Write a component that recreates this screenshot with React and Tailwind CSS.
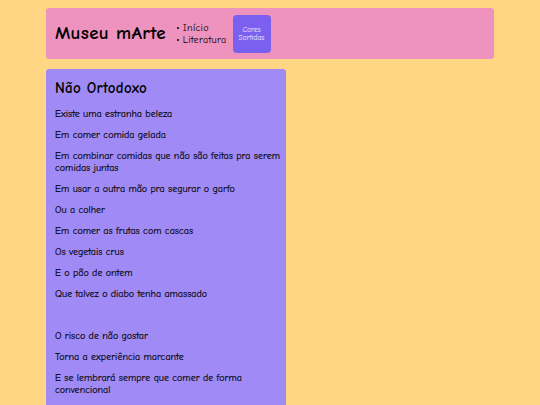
export default function App() {
  const lines = [
    "Existe uma estranha beleza",
    "Em comer comida gelada",
    "Em combinar comidas que não são feitas pra serem comidas juntas",
    "Em usar a outra mão pra segurar o garfo",
    "Ou a colher",
    "Em comer as frutas com cascas",
    "Os vegetais crus",
    "E o pão de ontem",
    "Que talvez o diabo tenha amassado",
    "",
    "O risco de não gostar",
    "Torna a experiência marcante",
    "E se lembrará sempre que comer de forma convencional",
  ];
  return (
    <div className="min-h-screen bg-[#ffd784] px-[46px] pt-[8px] text-black font-['Comic_Sans_MS','Comic_Neue','DejaVu_Sans',sans-serif]">
      <header className="flex items-center h-[51px] bg-[#ee92be] rounded-[3px] pl-[9px]">
        <h1 className="text-[19px] font-bold leading-none tracking-[0.3px]">Museu mArte</h1>
        <ul className="ml-[11px] text-[10px] leading-[12px] tracking-[0.3px]">
          <li className="flex items-center">
            <span className="w-[2px] h-[2px] rounded-full bg-black mr-[4px]"></span>
            Início
          </li>
          <li className="flex items-center">
            <span className="w-[2px] h-[2px] rounded-full bg-black mr-[4px]"></span>
            Literatura
          </li>
        </ul>
        <button className="ml-[6px] w-[38px] h-[38px] bg-[#7b60f0] rounded-[4px] text-[#f1ecff] text-[7.5px] leading-[8px] flex items-center justify-center text-center">
          Cores
          <br />
          Sortidas
        </button>
      </header>
      <main className="mt-[10px] w-[240px] bg-[#a08bf6] rounded-t-[3px] pl-[9px] pr-[4px] pt-[9px] pb-[10px]">
        <h2 className="text-[15px] font-bold leading-[20px] tracking-[0.3px]">Não Ortodoxo</h2>
        <div className="mt-[10px] flex flex-col gap-[9px] text-[10px] leading-[12px] [-webkit-text-stroke:0.15px_black]">
          {lines.map((l, i) => (
            <p key={i} className="min-h-[12px]">{l}</p>
          ))}
        </div>
      </main>
    </div>
  );
}
